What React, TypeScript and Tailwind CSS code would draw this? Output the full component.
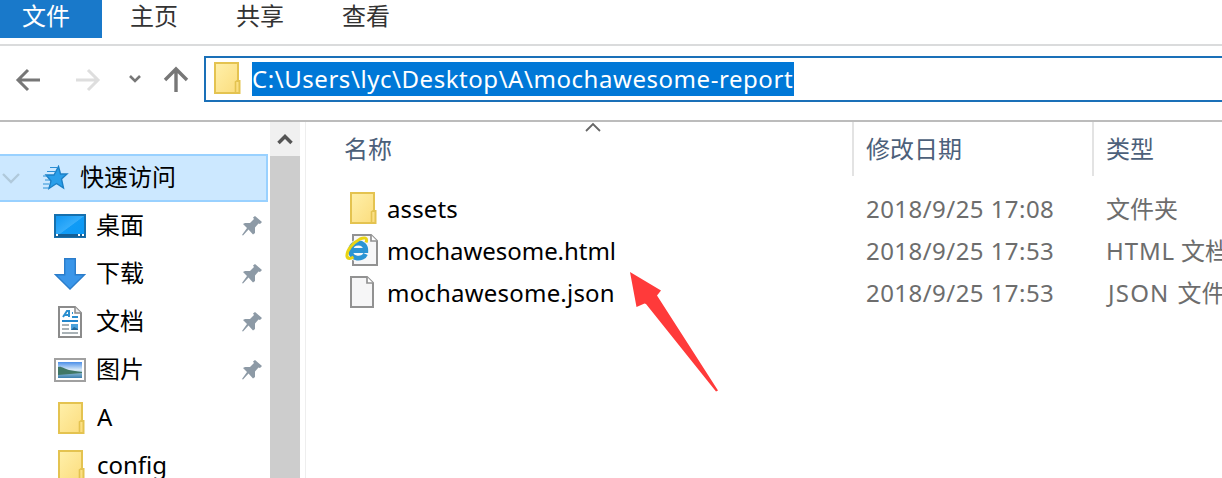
import React from 'react';

function Folder() {
  return (
    <svg width="28" height="32" viewBox="0 0 28 32" className="block shrink-0">
      <defs>
        <linearGradient id="folderFill" x1="0" y1="0" x2="1" y2="1">
          <stop offset="0" stopColor="#fff0aa" />
          <stop offset="1" stopColor="#fbdc7c" />
        </linearGradient>
      </defs>
      <path d="M1 1H24V19H25.5V31H1Z" fill="url(#folderFill)" stroke="#e4c350" strokeWidth="2" />
      <path d="M21.5 30V20L24 18" fill="none" stroke="#e4c350" strokeWidth="1.6" />
    </svg>
  );
}

function Star() {
  return (
    <svg width="28" height="26" viewBox="0 0 28 26" className="block">
      <path d="M17.5 1.5L19.5 9H26L20.5 14L22.5 23L15.5 18.5L8 23.5L10 16L5 10H13Z" fill="#2a9fea" stroke="#1c80c6" strokeWidth="1.4" />
      <path d="M9 2.5H16M6 6.5H14M2 11H7M4 15H9M2 19H8M2 23H8" stroke="#2b8fd5" strokeWidth="1.2" />
    </svg>
  );
}

function Desktop() {
  return (
    <svg width="32" height="24" viewBox="0 0 32 24" className="block">
      <defs>
        <linearGradient id="screen" x1="0" y1="0" x2="1" y2="1">
          <stop offset="0" stopColor="#0d95f2" />
          <stop offset="0.5" stopColor="#35adfb" />
          <stop offset="0.52" stopColor="#109bf6" />
          <stop offset="1" stopColor="#0c98f4" />
        </linearGradient>
      </defs>
      <rect x="1" y="1" width="30" height="22" fill="url(#screen)" stroke="#1670ae" strokeWidth="2" />
      <path d="M1 21.5H31" stroke="#145f96" strokeWidth="3" />
      <path d="M2 21H4M24 21H26M28 21H30" stroke="#fff" strokeWidth="2" />
    </svg>
  );
}

function Download() {
  return (
    <svg width="32" height="32" viewBox="0 0 32 32" className="block">
      <path d="M10.7 0.7H21.3V16.7H30.5L16 31L1.5 16.7H10.7Z" fill="#3a96e9" stroke="#2b7dcb" strokeWidth="1.4" />
    </svg>
  );
}

function Document() {
  return (
    <svg width="24" height="32" viewBox="0 0 24 32" className="block">
      <path d="M1 1H17L23 7V31H1Z" fill="#fff" stroke="#8b8b8b" strokeWidth="2" />
      <path d="M17 1V7H23" fill="#eee" stroke="#8b8b8b" strokeWidth="1.5" />
      <path d="M5 11L9 5H11V11M7 9H11M14 7H15M14 11H20" fill="none" stroke="#2c8fcf" strokeWidth="2" />
      <path d="M4 15H20" stroke="#2286cc" strokeWidth="2" />
      <path d="M4 19H11M4 23H11M4 27H20" stroke="#8d999f" strokeWidth="1.7" />
      <rect x="13" y="18" width="7" height="6" fill="#4aa1db" />
      <path d="M13 24L16 21L20 23V24Z" fill="#24699a" />
    </svg>
  );
}

function Picture() {
  return (
    <svg width="32" height="24" viewBox="0 0 32 24" className="block">
      <defs>
        <linearGradient id="sky" x1="0" y1="0" x2="0" y2="1">
          <stop offset="0" stopColor="#4b8fe8" />
          <stop offset="0.5" stopColor="#dcecf8" />
          <stop offset="0.65" stopColor="#91bbd3" />
          <stop offset="1" stopColor="#3b7fae" />
        </linearGradient>
      </defs>
      <rect x="1" y="1" width="30" height="22" fill="#fff" stroke="#a0a0a0" strokeWidth="2" />
      <rect x="4" y="4" width="24" height="16" fill="url(#sky)" />
      <path d="M4 9C8 8 10 11 15 12L24 13.5L28 14V15L4 17Z" fill="#407765" />
    </svg>
  );
}

function Pin() {
  return (
    <svg width="22" height="22" viewBox="0 0 22 22" className="block">
      <path d="M14 1L21 7L19 9L17.5 8.5L14 12.5V18L12 19.5L7.5 14.5L2 20.5L1 20L6 13L2 9L4 8H9L13 4L12 2.5Z" fill="#8d9aa6" />
    </svg>
  );
}

function Page() {
  return (
    <svg width="24" height="32" viewBox="0 0 24 32" className="block">
      <path d="M1 1H17L23 7V31H1Z" fill="#f6f6f7" stroke="#929292" strokeWidth="2" />
      <path d="M17 1V7H23" fill="#fff" stroke="#929292" strokeWidth="1.7" />
    </svg>
  );
}

function HtmlPage() {
  return (
    <svg width="34" height="32" viewBox="0 0 34 32" className="block">
      <path d="M8 1H26L32 7V31H8Z" fill="#f7f7f8" stroke="#929292" strokeWidth="2" />
      <path d="M26 1V7H32" fill="#fff" stroke="#929292" strokeWidth="1.7" />
      <path d="M7 16.5H20.8C21 6.5 6 6.5 5.6 16.5C5.4 26 18 26 20.5 20" fill="none" stroke="#f7f7f8" strokeWidth="7" />
      <path d="M7 16.5H20.8C21 6.5 6 6.5 5.6 16.5C5.4 26 18 26 20.5 20" fill="none" stroke="#2b94d4" strokeWidth="4.8" />
      <path d="M21 8.5C23 3.5 19.5 3.2 15 5C7.5 9 1.2 17 2 22.5C2.8 25.5 6 24.5 8.5 23" fill="none" stroke="#e9d414" strokeWidth="3" />
    </svg>
  );
}

const places = [
  { label: '桌面', icon: <Desktop />, pinned: true, text: 'ml-[10px]' },
  { label: '下载', icon: <Download />, pinned: true, text: 'ml-[10px]' },
  { label: '文档', icon: <div className="pl-1"><Document /></div>, pinned: true, text: 'ml-[10px]' },
  { label: '图片', icon: <Picture />, pinned: true, text: 'ml-[10px]' },
  { label: 'A', icon: <div className="pl-1"><Folder /></div>, pinned: false, text: 'ml-[11px]' },
  { label: 'config', icon: <div className="pl-1"><Folder /></div>, pinned: false, text: 'ml-[11px]' },
];

const files = [
  { name: 'assets', date: '2018/9/25 17:08', prefix: '', type: '文件夹', icon: <div className="-mt-[2px] pl-[5px]"><Folder /></div>, text: 'tracking-[0.1px]', gap: '' },
  { name: 'mochawesome.html', date: '2018/9/25 17:53', prefix: 'HTML', type: '文档', icon: <div className="-mt-[2px]"><HtmlPage /></div>, text: 'tracking-[-0.05px]', gap: 'mr-[6px] tracking-[0.9px]' },
  { name: 'mochawesome.json', date: '2018/9/25 17:53', prefix: 'JSON', type: '文件', icon: <div className="-mt-[2px] pl-[5px]"><Page /></div>, text: 'tracking-[0.2px]', gap: 'ml-[2px] mr-[8px] tracking-[1.2px]' },
];

function Sidebar() {
  return (
    <aside className="w-[270px] shrink-0 pt-8 text-black">
      <div className="flex h-12 w-[268px] items-center border-2 border-l-0 border-[#99d1ff] bg-[#cce8ff]">
        <svg width="20" height="12" viewBox="0 0 20 12" className="mr-[20px] ml-[1px] shrink-0">
          <path d="M2 2L10 10L18 2" fill="none" stroke="#b0c9db" strokeWidth="2.4" />
        </svg>
        <Star />
        <span className="-mt-[2px] ml-[11px]">快速访问</span>
      </div>
      {places.map((place) => (
        <div key={place.label} className="flex h-12 items-center pl-[54px]">
          <div className="w-8 shrink-0">{place.icon}</div>
          <span className={'-mt-[2px] flex-1 ' + place.text}>{place.label}</span>
          {place.pinned && <div className="mr-[7px]"><Pin /></div>}
        </div>
      ))}
    </aside>
  );
}

function FileList() {
  return (
    <main className="relative min-w-0 flex-1 overflow-hidden">
      <svg width="18" height="11" viewBox="0 0 18 11" className="absolute top-0 left-[277px]">
        <path d="M2 9L9 2L16 9" fill="none" stroke="#666" strokeWidth="1.8" />
      </svg>
      <div className="flex h-[54px] text-[#4c607a]">
        <div className="flex w-[547px] shrink-0 items-center border-r-2 border-[#e3e3e3] pl-[37px]">名称</div>
        <div className="flex w-[240px] shrink-0 items-center border-r-2 border-[#e3e3e3] pl-3">修改日期</div>
        <div className="flex items-center pl-3">类型</div>
      </div>
      <div className="pt-3">
        {files.map((file) => (
          <div key={file.name} className="flex h-[42px] items-center text-[#6d6d6d]">
            <div className="w-[80px] shrink-0 pl-[38px]">{file.icon}</div>
            <div className={'w-[479px] shrink-0 text-black ' + file.text}>{file.name}</div>
            <div className="w-[240px] shrink-0 tracking-[0.45px]">{file.date}</div>
            <div className="flex shrink-0">
              {file.prefix && <span className={file.gap}>{file.prefix}</span>}
              <span>{file.type}</span>
            </div>
          </div>
        ))}
      </div>
      <svg width="92" height="124" viewBox="0 0 92 124" className="absolute top-[148px] left-[322px]">
        <path d="M1 2L32 20.5L28 25.5L89 120.5L87 121.5L17 34L15.5 33.5L7.5 37Z" fill="#ff3a3a" />
      </svg>
    </main>
  );
}

export default function App() {
  return (
    <div className="flex h-[478px] w-[1222px] flex-col overflow-hidden bg-white font-['Noto_Sans','Noto_Sans_CJK_SC',sans-serif] text-[24px] leading-8 whitespace-nowrap">
      <nav className="flex h-[46px] shrink-0 border-b-2 border-[#dadbdc] text-[#333]">
        <div className="flex h-[38px] w-[102px] justify-center bg-[#1979ca] pr-[10px] text-white">文件</div>
        <div className="ml-[28px]">主页</div>
        <div className="ml-[58px]">共享</div>
        <div className="ml-[58px]">查看</div>
      </nav>
      <div className="flex h-[76px] shrink-0 items-center border-b-2 border-[#bcbcbc] pt-[10px] pb-[18px]">
        <svg width="204" height="32" viewBox="0 0 204 32" fill="none" className="shrink-0">
          <path d="M40 17H18M28 7L18 17L28 27" stroke="#777" strokeWidth="3" />
          <path d="M76 17H98M88 7L98 17L88 27" stroke="#dedede" strokeWidth="3" />
          <path d="M130 13L135 18L140 13" stroke="#777" strokeWidth="2.6" />
          <path d="M176 29V7M165 17L176 6L187 17" stroke="#777" strokeWidth="3.4" />
        </svg>
        <div className="flex h-[46px] flex-1 items-center border-2 border-r-0 border-[#1a70b8] pl-2">
          <div className="-mt-[2px]"><Folder /></div>
          <span className="ml-[10px] h-[34px] w-[542px] bg-[#0078d7] leading-[34px] tracking-[0.55px] text-white">C:\Users\lyc\Desktop\A\mochawesome-report</span>
        </div>
      </div>
      <div className="flex min-h-0 flex-1">
        <Sidebar />
        <div className="w-[30px] shrink-0 bg-[#cdcdcd]">
          <div className="flex h-[34px] items-center justify-center bg-[#f0f0f0]">
            <svg width="16" height="14" viewBox="0 0 16 14">
              <path d="M1.5 11L8 4.5L14.5 11" fill="none" stroke="#555" strokeWidth="3.5" />
            </svg>
          </div>
        </div>
        <div className="mr-[1px] ml-[5px] w-[1px] shrink-0 bg-[#eeeeee]" />
        <FileList />
      </div>
    </div>
  );
}
